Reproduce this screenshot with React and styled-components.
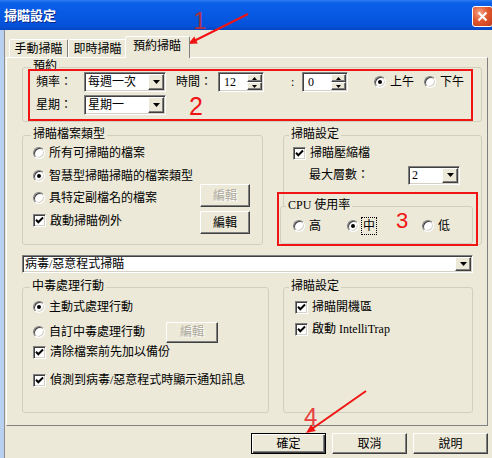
import styled, { createGlobalStyle, css } from 'styled-components';

const FONT = `"Liberation Serif", "Noto Sans CJK TC", serif`;
const FACE = '#ECE9D8';
const RED = '#f01414';

const GlobalStyle = createGlobalStyle`
  html, body { margin: 0; padding: 0; background: ${FACE}; }
  body { font-family: ${FONT}; font-size: 12px; line-height: 14px; color: #000; }
  *, *::before, *::after { box-sizing: border-box; }
`;

const sunken = css`
  background: #fff;
  border: 1px solid;
  border-color: #808080 #fff #fff #808080;
  box-shadow: inset 1px 1px #404040, inset -1px -1px #d4d0c8;
`;

const raised = css`
  background: ${FACE};
  border: 1px solid;
  border-color: #fff #404040 #404040 #fff;
  box-shadow: inset -1px -1px #808080;
`;

const Window = styled.div`
  position: relative;
  width: 492px;
  height: 458px;
  overflow: hidden;
  display: flex;
  flex-direction: column;
  background: ${FACE};
`;

const TitleBar = styled.div`
  flex: none;
  height: 30px;
  display: flex;
  align-items: center;
  justify-content: space-between;
  padding-left: 4px;
  background: linear-gradient(to bottom, #2c7cf2 0%, #0b60e8 10%, #0758e2 50%, #0552da 85%, #0346c4 100%);
`;

const Title = styled.span`
  font-family: "Noto Sans CJK TC", sans-serif;
  font-weight: bold;
  font-size: 13px;
  color: #fff;
  text-shadow: 1px 1px #0b2a8a;
`;

const CloseButton = styled.div`
  width: 21px;
  height: 21px;
  margin: 2px -1px 0 0;
  border: 1px solid #fff;
  border-radius: 3px;
  background: radial-gradient(circle at 35% 30%, #f3a486 0%, #e2582f 45%, #c23a1a 100%);
  display: flex;
  align-items: center;
  justify-content: center;
`;

const Body = styled.div`
  flex: 1;
  display: flex;
  flex-direction: column;
  align-items: flex-start;
  border-left: 4px solid #b9d1f0;
  box-shadow: inset 1px 0 #8d8d8d;
  padding: 6px 4px 0 2px;
`;

const TabStrip = styled.div`
  display: flex;
  align-items: flex-end;
  height: 21px;
  padding-left: 3px;
  position: relative;
  z-index: 1;
`;

const Tab = styled.div`
  height: ${p => (p.$active ? 22 : 18)}px;
  padding: ${p => (p.$active ? '0 8px 3px 7px' : '0 4.5px')};
  margin: ${p => (p.$active ? '0 -2px -1px' : '0')};
  display: flex;
  align-items: center;
  white-space: nowrap;
  background: ${FACE};
  border: 1px solid;
  border-bottom: none;
  border-color: #fff #808080 transparent #fff;
  border-radius: 2px 2px 0 0;
  position: relative;
  z-index: ${p => (p.$active ? 2 : 1)};
`;

const Panel = styled.div`
  width: 482px;
  height: 369px;
  border: 1px solid;
  border-color: #fff #808080 #808080 #fff;
  padding-left: 15px;
  display: flex;
  flex-direction: column;
  align-items: flex-start;
`;

const Group = styled.div`
  position: relative;
  flex: none;
  width: ${p => p.$w}px;
  height: ${p => p.$h}px;
  margin-top: ${p => p.$mt || 0}px;
  margin-left: ${p => p.$ml || 0}px;
  padding: ${p => p.$pad};
  border: 1px solid #d0d0bf;
  border-radius: 3px;
  background: ${p => (p.$fill ? FACE : 'transparent')};
`;

const Caption = styled.span`
  position: absolute;
  top: -9px;
  left: ${p => p.$left ?? 8}px;
  padding: 0 2px;
  background: ${FACE};
  line-height: 14px;
  white-space: nowrap;
`;

const FormRow = styled.div`
  display: flex;
  align-items: center;
  height: 20px;
  margin-top: ${p => p.$mt || 0}px;
  padding-left: ${p => p.$pl || 0}px;
`;

const FieldLabel = styled.span`
  flex: none;
  width: ${p => p.$w}px;
  margin-left: ${p => p.$ml || 0}px;
  white-space: nowrap;
`;

const TimeSep = styled.span`
  flex: none;
  width: 38px;
  padding-left: 27px;
`;

const Choices = styled.div`
  display: flex;
  gap: ${p => p.$gap}px;
  margin-left: ${p => p.$ml || 0}px;
`;

const CpuChoices = styled.div`
  display: grid;
  grid-template-columns: 54px 75px auto;
`;

const GroupRow = styled.div`
  display: flex;
  gap: ${p => p.$gap}px;
  margin-top: ${p => p.$mt}px;
`;

const SplitBody = styled.div`
  display: grid;
  grid-template-columns: 1fr 50px;
`;

const OptionList = styled.div`
  display: flex;
  flex-direction: column;
  gap: ${p => p.$gap}px;
`;

const ButtonStack = styled.div`
  display: flex;
  flex-direction: column;
  gap: 4px;
  padding-top: 41px;
`;

const Field = styled.div`
  ${sunken};
  flex: none;
  width: ${p => p.$w}px;
  height: ${p => p.$h}px;
  margin-top: ${p => p.$mt || 0}px;
  margin-left: ${p => p.$ml || 0}px;
  padding: 1px;
  display: flex;
  align-items: stretch;
`;

const FieldText = styled.span`
  flex: 1;
  display: flex;
  align-items: center;
  padding-left: ${p => p.$pl ?? 2}px;
  white-space: nowrap;
  overflow: hidden;
`;

const DropButton = styled.span`
  ${raised};
  flex: none;
  width: 16px;
  display: flex;
  align-items: center;
  justify-content: center;
`;

const SpinButtons = styled.span`
  flex: none;
  width: 15px;
  display: flex;
  flex-direction: column;
`;

const SpinButton = styled.span`
  ${raised};
  flex: 1;
  display: flex;
  align-items: center;
  justify-content: center;
`;

const OptionRow = styled.label`
  display: flex;
  align-items: center;
  gap: 4px;
  height: 20px;
  flex: none;
  white-space: nowrap;
  margin-top: ${p => p.$mt || 0}px;
`;

const RadioMark = styled.span`
  flex: none;
  width: 12px;
  height: 12px;
  border-radius: 50%;
  background: #fff;
  border: 1px solid;
  border-color: #808080 #fff #fff #808080;
  box-shadow: inset 1px 1px #404040, inset -1px -1px #d4d0c8;
  display: flex;
  align-items: center;
  justify-content: center;

  &::after {
    content: '';
    display: ${p => (p.$on ? 'block' : 'none')};
    width: 4px;
    height: 4px;
    border-radius: 50%;
    background: #000;
  }
`;

const CheckMark = styled.span`
  ${sunken};
  flex: none;
  width: 13px;
  height: 13px;
  display: flex;
  align-items: center;
  justify-content: center;
`;

const FocusText = styled.span`
  outline: 1px dotted #000;
  outline-offset: 1px;
`;

const Button = styled.button`
  ${raised};
  flex: none;
  width: ${p => p.$w}px;
  height: ${p => p.$h}px;
  margin-left: ${p => p.$ml || 0}px;
  padding: 0;
  font: inherit;
  display: flex;
  align-items: center;
  justify-content: center;
  color: #000;

  &:disabled {
    color: #aca899;
    text-shadow: 1px 1px #fff;
  }

  ${p => p.$default && css`
    border-color: #000;
    box-shadow: inset 1px 1px #fff, inset -1px -1px #404040, inset -2px -2px #808080;
  `}
`;

const ButtonRow = styled.div`
  align-self: stretch;
  display: flex;
  justify-content: flex-end;
  gap: 6px;
  margin-top: 7px;
`;

const RedBox = styled.div`
  position: absolute;
  left: ${p => p.$x}px;
  top: ${p => p.$y}px;
  width: ${p => p.$w}px;
  height: ${p => p.$h}px;
  border: 2px solid ${RED};
  pointer-events: none;
`;

const Marker = styled.span`
  position: absolute;
  left: ${p => p.$x}px;
  top: ${p => p.$y}px;
  font-family: "Liberation Sans", sans-serif;
  font-size: ${p => p.$size}px;
  line-height: 1;
  color: ${p => p.$color};
  pointer-events: none;
`;

const Overlay = styled.svg`
  position: absolute;
  left: 0;
  top: 0;
  pointer-events: none;
`;

function Tri({ up, w = 7, h = 4 }) {
  return (
    <svg width={w} height={h} viewBox={`0 0 ${w} ${h}`}>
      <path d={up ? `M0 ${h}H${w}L${w / 2} 0Z` : `M0 0H${w}L${w / 2} ${h}Z`} fill="#000" />
    </svg>
  );
}

function Dropdown({ width, height = 20, value, mt, ml, pl }) {
  return (
    <Field $w={width} $h={height} $mt={mt} $ml={ml}>
      <FieldText $pl={pl}>{value}</FieldText>
      <DropButton><Tri /></DropButton>
    </Field>
  );
}

function Spinner({ width, value }) {
  return (
    <Field $w={width} $h={20}>
      <FieldText $pl={4}>{value}</FieldText>
      <SpinButtons>
        <SpinButton><Tri up w={5} h={3} /></SpinButton>
        <SpinButton><Tri w={5} h={3} /></SpinButton>
      </SpinButtons>
    </Field>
  );
}

function Option({ kind, on, focus, label, mt }) {
  return (
    <OptionRow $mt={mt}>
      {kind === 'radio' ? (
        <RadioMark $on={on} />
      ) : (
        <CheckMark>
          {on && (
            <svg width="9" height="9" viewBox="0 0 9 9">
              <path d="M1 3.8L3.3 6.2L8 1.5" stroke="#000" strokeWidth="2" fill="none" />
            </svg>
          )}
        </CheckMark>
      )}
      {focus ? <FocusText>{label}</FocusText> : <span>{label}</span>}
    </OptionRow>
  );
}

export default function App() {
  return (
    <>
      <GlobalStyle />
      <Window>
        <TitleBar>
          <Title>掃瞄設定</Title>
          <CloseButton>
            <svg width="11" height="11" viewBox="0 0 11 11">
              <path d="M1.5 1.5L9.5 9.5M9.5 1.5L1.5 9.5" stroke="#fff" strokeWidth="2.2" />
            </svg>
          </CloseButton>
        </TitleBar>

        <Body>
          <TabStrip>
            <Tab>手動掃瞄</Tab>
            <Tab>即時掃瞄</Tab>
            <Tab $active>預約掃瞄</Tab>
          </TabStrip>

          <Panel>
            <Group $w={460} $h={55} $mt={9} $pad="4px 0 0 13px">
              <Caption>預約</Caption>
              <FormRow>
                <FieldLabel $w={48}>頻率：</FieldLabel>
                <Dropdown width={82} value="每週一次" />
                <FieldLabel $w={42} $ml={10}>時間：</FieldLabel>
                <Spinner width={46} value="12" />
                <TimeSep>:</TimeSep>
                <Spinner width={46} value="0" />
                <Choices $ml={26} $gap={10}>
                  <Option kind="radio" on label="上午" />
                  <Option kind="radio" label="下午" />
                </Choices>
              </FormRow>
              <FormRow $mt={3}>
                <FieldLabel $w={48}>星期：</FieldLabel>
                <Dropdown width={82} value="星期一" />
              </FormRow>
            </Group>

            <GroupRow $mt={13} $gap={20}>
              <Group $w={241} $h={110} $pad="7px 12px 0 10px">
                <Caption>掃瞄檔案類型</Caption>
                <SplitBody>
                  <OptionList $gap={2.5}>
                    <Option kind="radio" label="所有可掃瞄的檔案" />
                    <Option kind="radio" on label="智慧型掃瞄掃瞄的檔案類型" />
                    <Option kind="radio" label="具特定副檔名的檔案" />
                    <Option kind="check" on label="啟動掃瞄例外" />
                  </OptionList>
                  <ButtonStack>
                    <Button $w={50} $h={23} disabled>編輯</Button>
                    <Button $w={50} $h={23}>編輯</Button>
                  </ButtonStack>
                </SplitBody>
              </Group>

              <Group $w={199} $h={110} $pad="7px 0 0 9px">
                <Caption $left={5}>掃瞄設定</Caption>
                <Option kind="check" on label="掃瞄壓縮檔" />
                <FormRow $mt={2} $pl={16}>
                  <FieldLabel $w={60}>最大層數：</FieldLabel>
                  <Dropdown width={52} height={19} ml={39} value="2" />
                </FormRow>
                <Group $w={193} $h={38} $mt={21} $ml={-13} $pad="9px 0 0 12px" $fill>
                  <Caption $left={5}>CPU 使用率</Caption>
                  <CpuChoices>
                    <Option kind="radio" label="高" />
                    <Option kind="radio" on focus label="中" />
                    <Option kind="radio" label="低" />
                  </CpuChoices>
                </Group>
              </Group>
            </GroupRow>

            <Dropdown width={451} height={18} mt={10} pl={1} value="病毒/惡意程式掃瞄" />

            <GroupRow $mt={14} $gap={14}>
              <Group $w={247} $h={126} $pad="9px 0 0 10px">
                <Caption $left={7}>中毒處理行動</Caption>
                <Option kind="radio" on label="主動式處理行動" />
                <FormRow $mt={5}>
                  <Option kind="radio" label="自訂中毒處理行動" />
                  <Button $w={52} $h={21} $ml={21} disabled>編輯</Button>
                </FormRow>
                <Option kind="check" on label="清除檔案前先加以備份" />
                <Option kind="check" on mt={8} label="偵測到病毒/惡意程式時顯示通知訊息" />
              </Group>

              <Group $w={190} $h={126} $pad="9px 0 0 11px">
                <Caption $left={5}>掃瞄設定</Caption>
                <Option kind="check" on label="掃瞄開機區" />
                <Option kind="check" on mt={2} label="啟動 IntelliTrap" />
              </Group>
            </GroupRow>
          </Panel>

          <ButtonRow>
            <Button $w={75} $h={21} $default>確定</Button>
            <Button $w={75} $h={21}>取消</Button>
            <Button $w={75} $h={21}>說明</Button>
          </ButtonRow>
        </Body>

        <RedBox $x={28} $y={69} $w={445} $h={52} />
        <RedBox $x={277} $y={192} $w={201} $h={54} />
        <Marker $x={193} $y={9} $size={24} $color="#b03040">1</Marker>
        <Marker $x={189} $y={94} $size={25} $color={RED}>2</Marker>
        <Marker $x={396} $y={210} $size={22} $color={RED}>3</Marker>
        <Marker $x={304} $y={405} $size={24} $color="#e84040">4</Marker>
        <Overlay width="492" height="458" viewBox="0 0 492 458">
          <line x1="248" y1="14" x2="194" y2="41" stroke={RED} strokeWidth="2" />
          <polygon points="188,44 197.8,43.6 194.3,36.4" fill={RED} />
          <line x1="366" y1="391" x2="311" y2="429.5" stroke={RED} strokeWidth="2" />
          <polygon points="306,433 315.7,431.1 311.1,424.5" fill={RED} />
        </Overlay>
      </Window>
    </>
  );
}
